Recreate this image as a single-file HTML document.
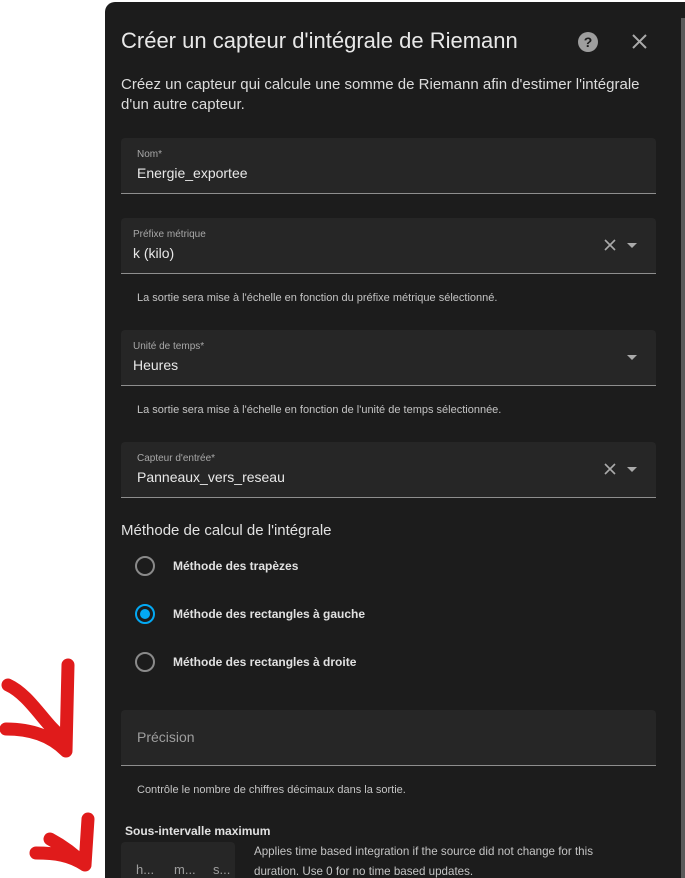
<!DOCTYPE html>
<html style="overflow:hidden;height:878px"><head><meta charset="utf-8"><style>
*{margin:0;padding:0;box-sizing:border-box}
body{width:685px;height:878px;background:#fff;position:relative;overflow:hidden;font-family:"Liberation Sans",sans-serif}
.dlg{position:absolute;left:105px;top:2px;width:580px;height:876px;background:#1c1c1c;border-radius:10px 0 0 0;color:#e1e1e1;overflow:hidden}
.sb{position:absolute;left:681px;top:18px;width:4px;height:860px;background:#5a5a5a}
.t{position:absolute;white-space:nowrap}
.f{position:absolute;left:16px;width:535px;height:56px;background:#262626;border-radius:4px 4px 0 0;border-bottom:1px solid #8e8e8e}
.lbl{position:absolute;left:12px;top:11px;font-size:10px;color:#a8a8a8}
.val{position:absolute;left:12px;top:27px;font-size:14px;color:#e8e8e8}
.help{position:absolute;left:32px;font-size:11px;color:#c4c4c4}
.x{position:absolute;right:40px;top:21px}
.dd{position:absolute;right:19px;top:25px;width:0;height:0;border-left:5px solid transparent;border-right:5px solid transparent;border-top:5px solid #aaa}
.r{position:absolute;left:30px;width:20px;height:20px;border:2px solid #8a8a8a;border-radius:50%}
.rl{position:absolute;left:68px;font-size:12px;color:#e1e1e1;font-weight:bold}
</style></head><body>
<div class="dlg">
 <div class="t" style="left:16px;top:26px;font-size:22px;color:#e8e8e8">Créer un capteur d'intégrale de Riemann</div>
 <div style="position:absolute;left:473px;top:30px;width:20px;height:20px;border-radius:50%;background:#9e9e9e;color:#1c1c1c;font-weight:bold;font-size:14px;text-align:center;line-height:20px">?</div>
 <svg style="position:absolute;left:527px;top:32px" width="15" height="15"><path d="M1 1L14 14M14 1L1 14" stroke="#aaa" stroke-width="2"/></svg>
 <div class="t" style="left:16px;top:73px;font-size:15px;line-height:20px;color:#dcdcdc">Créez un capteur qui calcule une somme de Riemann afin d'estimer l'intégrale<br>d'un autre capteur.</div>
 <div class="f" style="top:136px"><div class="lbl" style="left:16px">Nom*</div><div class="val" style="left:16px">Energie_exportee</div></div>
 <div class="f" style="top:216px"><div class="lbl">Préfixe métrique</div><div class="val">k (kilo)</div>
  <svg class="x" width="12" height="12"><path d="M1 1L11 11M11 1L1 11" stroke="#aaa" stroke-width="1.6"/></svg><div class="dd"></div></div>
 <div class="help" style="top:290px">La sortie sera mise à l'échelle en fonction du préfixe métrique sélectionné.</div>
 <div class="f" style="top:328px"><div class="lbl">Unité de temps*</div><div class="val">Heures</div><div class="dd"></div></div>
 <div class="help" style="top:402px">La sortie sera mise à l'échelle en fonction de l'unité de temps sélectionnée.</div>
 <div class="f" style="top:440px"><div class="lbl" style="left:16px">Capteur d'entrée*</div><div class="val" style="left:16px">Panneaux_vers_reseau</div>
  <svg class="x" width="12" height="12"><path d="M1 1L11 11M11 1L1 11" stroke="#aaa" stroke-width="1.6"/></svg><div class="dd"></div></div>
 <div class="t" style="left:16px;top:520px;font-size:15px;color:#e1e1e1">Méthode de calcul de l'intégrale</div>
 <div class="r" style="top:554px"></div><div class="t rl" style="top:557px">Méthode des trapèzes</div>
 <div class="r" style="top:602px;border-color:#03a9f4"><div style="position:absolute;left:3px;top:3px;width:10px;height:10px;border-radius:50%;background:#03a9f4"></div></div><div class="t rl" style="top:605px">Méthode des rectangles à gauche</div>
 <div class="r" style="top:650px"></div><div class="t rl" style="top:653px">Méthode des rectangles à droite</div>
 <div class="f" style="top:708px"><div class="val" style="left:16px;top:19px;color:#9e9e9e">Précision</div></div>
 <div class="help" style="top:782px">Contrôle le nombre de chiffres décimaux dans la sortie.</div>
 <div class="t" style="left:20px;top:822px;font-size:12px;font-weight:bold;color:#e1e1e1">Sous-intervalle maximum</div>
 <div style="position:absolute;left:16px;top:840px;width:114px;height:50px;background:#262626;border-radius:4px 4px 0 0"></div>
 <div class="t" style="left:31px;top:860px;font-size:13px;color:#9e9e9e">h...</div>
 <div class="t" style="left:69px;top:860px;font-size:13px;color:#9e9e9e">m...</div>
 <div class="t" style="left:108px;top:860px;font-size:13px;color:#9e9e9e">s...</div>
 <div class="t" style="left:149px;top:840px;font-size:11.6px;line-height:20px;color:#c4c4c4">Applies time based integration if the source did not change for this<br>duration. Use 0 for no time based updates.</div>
</div>
<div class="sb"></div>
<svg style="position:absolute;left:0;top:655px" width="100" height="223">
<path d="M68 10 L66 96 M8 30 C30 40 45 70 62 82 M6 74 C30 74 50 80 66 96" stroke="#e01b1b" stroke-width="13" fill="none" stroke-linecap="round" stroke-linejoin="round"/>
<path d="M88 164 L85 210 M50 184 C65 192 75 200 85 210 M36 198 C55 198 70 200 85 210" stroke="#e01b1b" stroke-width="13" fill="none" stroke-linecap="round" stroke-linejoin="round"/>
</svg>
</body></html>
